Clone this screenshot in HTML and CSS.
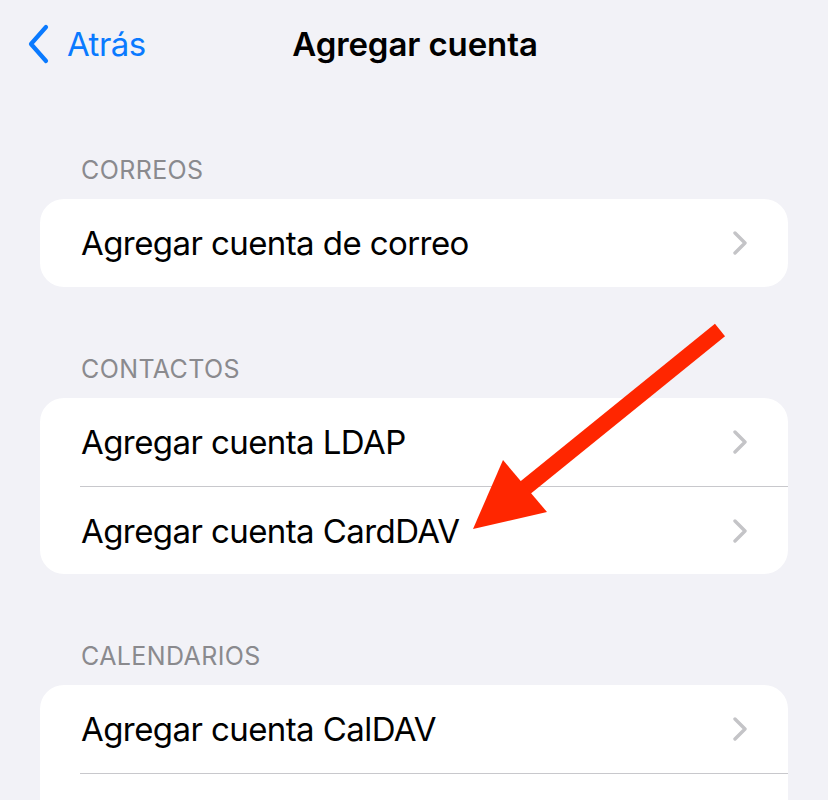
FILE: index.html
```html
<!DOCTYPE html>
<html lang="es">
<head>
<meta charset="utf-8">
<title>Agregar cuenta</title>
<link rel="stylesheet" href="styles.css">
</head>
<body>
<div class="screen">
  <header class="nav">
    <div class="back">
      <svg class="back-chev" width="24" height="40" viewBox="0 0 24 40"><path d="M20 3 L5 20 L20 37" fill="none" stroke="#0a7aff" stroke-width="4.2" stroke-linecap="round" stroke-linejoin="round"/></svg>
      <span class="back-label">Atrás</span>
    </div>
    <div class="title">Agregar cuenta</div>
  </header>

  <section class="group">
    <div class="group-header">CORREOS</div>
    <div class="card">
      <div class="row"><span class="row-label">Agregar cuenta de correo</span><svg class="chev" width="16" height="24" viewBox="0 0 16 24"><path d="M3 2 L13 12 L3 22" fill="none" stroke="#c4c4c7" stroke-width="3.4" stroke-linecap="round" stroke-linejoin="round"/></svg></div>
    </div>
  </section>

  <section class="group">
    <div class="group-header">CONTACTOS</div>
    <div class="card">
      <div class="row"><span class="row-label">Agregar cuenta LDAP</span><svg class="chev" width="16" height="24" viewBox="0 0 16 24"><path d="M3 2 L13 12 L3 22" fill="none" stroke="#c4c4c7" stroke-width="3.4" stroke-linecap="round" stroke-linejoin="round"/></svg></div>
      <div class="row"><span class="row-label">Agregar cuenta CardDAV</span><svg class="chev" width="16" height="24" viewBox="0 0 16 24"><path d="M3 2 L13 12 L3 22" fill="none" stroke="#c4c4c7" stroke-width="3.4" stroke-linecap="round" stroke-linejoin="round"/></svg></div>
    </div>
  </section>

  <section class="group">
    <div class="group-header">CALENDARIOS</div>
    <div class="card">
      <div class="row"><span class="row-label">Agregar cuenta CalDAV</span><svg class="chev" width="16" height="24" viewBox="0 0 16 24"><path d="M3 2 L13 12 L3 22" fill="none" stroke="#c4c4c7" stroke-width="3.4" stroke-linecap="round" stroke-linejoin="round"/></svg></div>
      <div class="row"></div>
    </div>
  </section>

  <svg class="arrow" width="828" height="800" viewBox="0 0 828 800">
    <line x1="720" y1="330" x2="520" y2="492" stroke="#ff2600" stroke-width="16" stroke-linecap="butt"/>
    <polygon points="473,529 503,460 547,512" fill="#ff2600"/>
  </svg>
</div>
</body>
</html>
```

FILE: styles.css
```css
* { box-sizing: border-box; }
html, body {
  margin: 0;
  padding: 0;
  background: #f2f2f7;
}
.screen {
  position: relative;
  width: 828px;
  height: 800px;
  overflow: hidden;
  font-family: Inter, "Noto Sans", "Liberation Sans", sans-serif;
  color: #000;
}
.nav {
  position: relative;
  height: 88px;
  display: flex;
  align-items: center;
  justify-content: center;
}
.back {
  position: absolute;
  left: 26px;
  top: 24px;
  height: 40px;
  display: flex;
  align-items: center;
  gap: 17px;
  color: #0a7aff;
}
.back-label {
  font-size: 33px;
  letter-spacing: -0.5px;
}
.title {
  font-size: 33px;
  font-weight: 600;
  letter-spacing: -0.1px;
  margin-left: 2px;
}
.group {
  margin-top: 67px;
}
.group-header {
  height: 30px;
  line-height: 30px;
  padding-left: 81px;
  font-size: 25px;
  letter-spacing: 0.4px;
  color: #8a8a8e;
  margin-bottom: 14px;
}
.card {
  margin: 0 40px;
  background: #fff;
  border-radius: 24px;
  overflow: hidden;
}
.row {
  position: relative;
  height: 88px;
  display: flex;
  align-items: center;
  justify-content: space-between;
  padding: 0 40px 0 41px;
}
.row + .row {
  border-top: 1px solid #c8c8cc;
  margin-left: 40px;
  padding-left: 1px;
}
.row-label {
  font-size: 33px;
  letter-spacing: -0.58px;
}
.chev {
  display: block;
}
.arrow {
  position: absolute;
  left: 0;
  top: 0;
  pointer-events: none;
}
```
